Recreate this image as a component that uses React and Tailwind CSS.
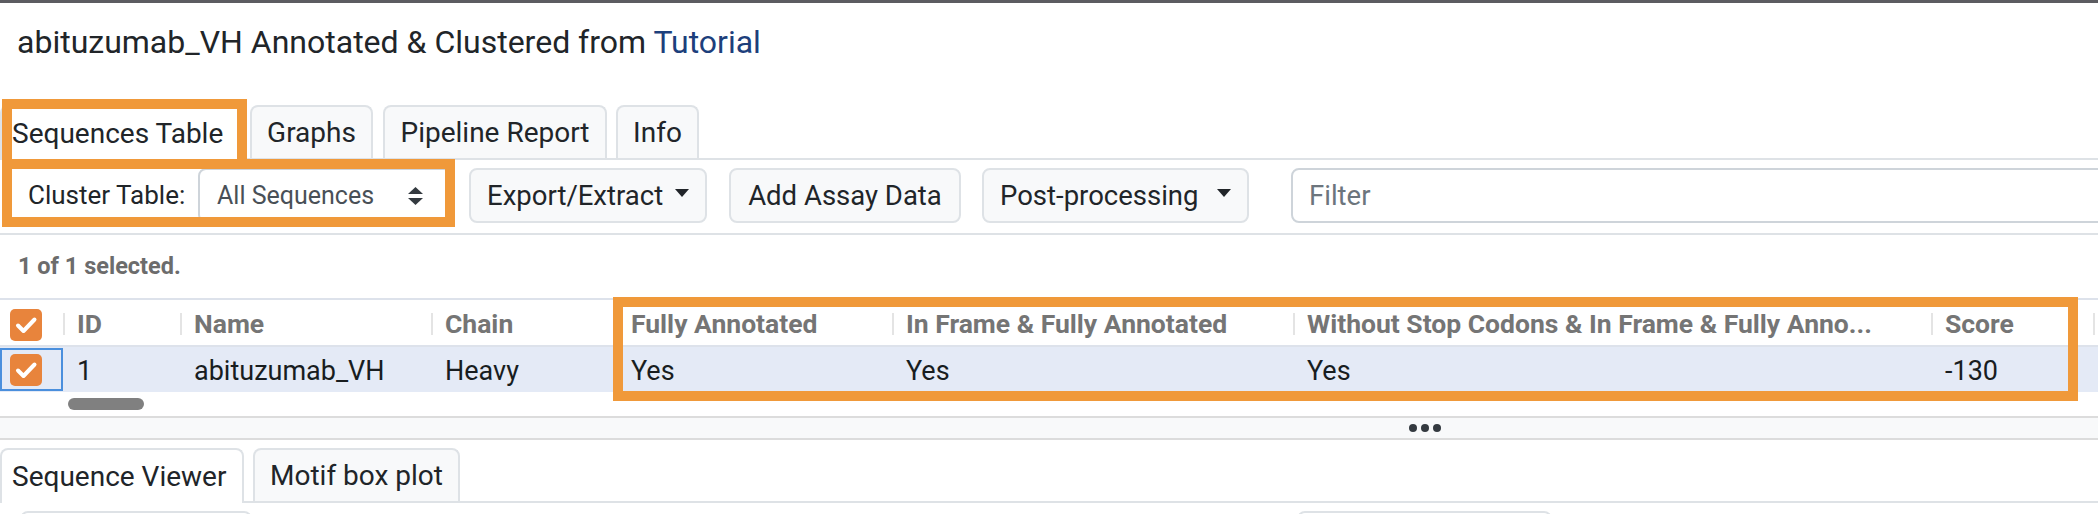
function Caret() {
  return (
    <span className="mb-[6px] h-0 w-0 shrink-0 border-x-[7.5px] border-t-[8px] border-x-transparent border-t-[#212529]" />
  );
}

function CheckBox() {
  return (
    <svg width="32" height="32" viewBox="0 0 32 32">
      <rect x="0" y="0" width="32" height="32" rx="5" fill="#e8843c" />
      <path d="M8 16.5 L13.5 22 L24.5 10.5" fill="none" stroke="#fff" strokeWidth="4" strokeLinecap="round" strokeLinejoin="round" />
    </svg>
  );
}

const columns = [
  { label: "ID", value: "1" },
  { label: "Name", value: "abituzumab_VH" },
  { label: "Chain", value: "Heavy" },
  { label: "Fully Annotated", value: "Yes" },
  { label: "In Frame & Fully Annotated", value: "Yes" },
  { label: "Without Stop Codons & In Frame & Fully Anno...", value: "Yes" },
  { label: "Score", value: "-130" },
  { label: "", value: "" },
];

export default function App() {
  return (
    <div className="relative h-[514px] w-[2098px] overflow-hidden bg-white font-['Roboto',sans-serif] text-[#212529]">
      <div className="h-[3px] bg-[#5c5c61]" />

      <div className="pl-[17px] pt-[20px] text-[32px] leading-[38px] whitespace-nowrap">
        abituzumab_VH Annotated &amp; Clustered from <span className="text-[#1d3f7c]">Tutorial</span>
      </div>

      {/* main tabs */}
      <div className="mt-[44px] flex h-[55px] items-end border-b-2 border-[#dee2e6] text-[28px] whitespace-nowrap">
        <div className="-mb-[2px] flex h-[55px] w-[241px] shrink-0 items-center rounded-t-[8px] border-2 border-b-0 border-[#dee2e6] bg-white pl-[10px]">
          Sequences Table
        </div>
        <div className="ml-[9px] flex h-[53px] w-[123px] shrink-0 items-center justify-center rounded-t-[8px] border-2 border-b-0 border-[#dee2e6] bg-[#f8f9fa]">
          Graphs
        </div>
        <div className="ml-[10px] flex h-[53px] w-[224px] shrink-0 items-center justify-center rounded-t-[8px] border-2 border-b-0 border-[#dee2e6] bg-[#f8f9fa]">
          Pipeline Report
        </div>
        <div className="ml-[9px] flex h-[53px] w-[83px] shrink-0 items-center justify-center rounded-t-[8px] border-2 border-b-0 border-[#dee2e6] bg-[#f8f9fa]">
          Info
        </div>
      </div>

      {/* toolbar */}
      <div className="flex h-[75px] items-start border-b-2 border-[#dee2e6] pt-[8px] text-[27.5px] whitespace-nowrap">
        <div className="flex h-[55px] w-[198px] shrink-0 items-center pl-[28px] text-[26px]">Cluster Table:</div>
        <div className="flex h-[55px] w-[254px] shrink-0 items-center justify-between rounded-[8px] border-2 border-[#ced4da] pl-[17px] pr-[27px] text-[25px] text-[#495057]">
          <span>All Sequences</span>
          <svg width="15" height="18" viewBox="0 0 15 18">
            <polygon points="7.5,0 15,7 0,7" fill="#343a40" />
            <polygon points="0,11 15,11 7.5,18" fill="#343a40" />
          </svg>
        </div>
        <div className="ml-[17px] flex h-[55px] w-[238px] shrink-0 items-center justify-between rounded-[8px] border-2 border-[#dee2e6] bg-[#f8f9fa] pl-[16px] pr-[16px]">
          <span>Export/Extract</span>
          <Caret />
        </div>
        <div className="ml-[22px] flex h-[55px] w-[232px] shrink-0 items-center justify-center rounded-[8px] border-2 border-[#dee2e6] bg-[#f8f9fa]">
          Add Assay Data
        </div>
        <div className="ml-[21px] flex h-[55px] w-[267px] shrink-0 items-center justify-between rounded-[8px] border-2 border-[#dee2e6] bg-[#f8f9fa] pl-[16px] pr-[16px]">
          <span>Post-processing</span>
          <Caret />
        </div>
        <input
          placeholder="Filter"
          className="ml-[42px] h-[55px] w-[900px] shrink-0 rounded-l-[8px] border-2 border-[#ced4da] pl-[16px] outline-none placeholder:text-[#6c757d]"
        />
      </div>

      <div className="flex h-[63px] items-center pl-[18px] text-[23.5px] font-bold text-[#6c6c6c]">1 of 1 selected.</div>

      {/* grid */}
      <div className="border-t-2 border-[#dde2eb]">
        <div className="grid h-[47px] grid-cols-[63px_117px_251px_186px_275px_401px_638px_162px_1fr] border-b-2 border-[#dde2eb] text-[26.5px] font-bold text-[#757575]">
          <div className="flex items-center pl-[10px] pt-[4px]">
            <CheckBox />
          </div>
          {columns.map((c, i) => (
            <div key={i} className="flex items-center overflow-hidden whitespace-nowrap pt-[3px]">
              <span className="h-[22px] w-[2px] shrink-0 bg-[#e4e4e4]" />
              <span className="ml-[12px]">{c.label}</span>
            </div>
          ))}
        </div>
        <div className="grid h-[45px] grid-cols-[63px_117px_251px_186px_275px_401px_638px_162px_1fr] bg-[#e4eaf6] text-[27px] text-[#181d1f]">
          <div className="my-[1px] flex items-center border-2 border-[#4a8fdd] pl-[8px]">
            <CheckBox />
          </div>
          {columns.map((c, i) => (
            <div key={i} className="flex items-center whitespace-nowrap pl-[14px] pt-[3px]">
              {c.value}
            </div>
          ))}
        </div>
        <div className="h-[24px] pl-[68px] pt-[6px]">
          <div className="h-[12px] w-[76px] rounded-full bg-[#808080]" />
        </div>
      </div>

      {/* resize handle */}
      <div className="flex h-[24px] items-center border-y-2 border-[#dcdcdc] bg-[#f8f9fa] pl-[1409px]">
        <div className="flex gap-[4px]">
          <span className="h-[8px] w-[8px] rounded-full bg-[#343a40]" />
          <span className="h-[8px] w-[8px] rounded-full bg-[#343a40]" />
          <span className="h-[8px] w-[8px] rounded-full bg-[#343a40]" />
        </div>
      </div>

      {/* lower tabs */}
      <div className="mt-[8px] flex h-[55px] items-end border-b-2 border-[#dee2e6] text-[28px] whitespace-nowrap">
        <div className="-mb-[2px] flex h-[55px] w-[244px] shrink-0 items-center rounded-t-[8px] border-2 border-b-0 border-[#dee2e6] bg-white pl-[10px]">
          Sequence Viewer
        </div>
        <div className="ml-[9px] flex h-[53px] w-[207px] shrink-0 items-center justify-center rounded-t-[8px] border-2 border-b-0 border-[#dee2e6] bg-[#f8f9fa]">
          Motif box plot
        </div>
      </div>

      <div className="mt-[8px] flex">
        <div className="ml-[20px] h-[20px] w-[232px] rounded-[8px] border-2 border-[#dee2e6]" />
        <div className="ml-[1045px] h-[20px] w-[255px] rounded-[8px] border-2 border-[#dee2e6]" />
      </div>

      {/* annotation boxes */}
      <div className="absolute left-[2px] top-[99px] h-[70px] w-[245px] border-[10px] border-[#f0993a]" />
      <div className="absolute left-[2px] top-[159px] h-[68px] w-[453px] border-[10px] border-[#f0993a]" />
      <div className="absolute left-[613px] top-[297px] h-[104px] w-[1465px] border-[10px] border-[#f0993a]" />
    </div>
  );
}
